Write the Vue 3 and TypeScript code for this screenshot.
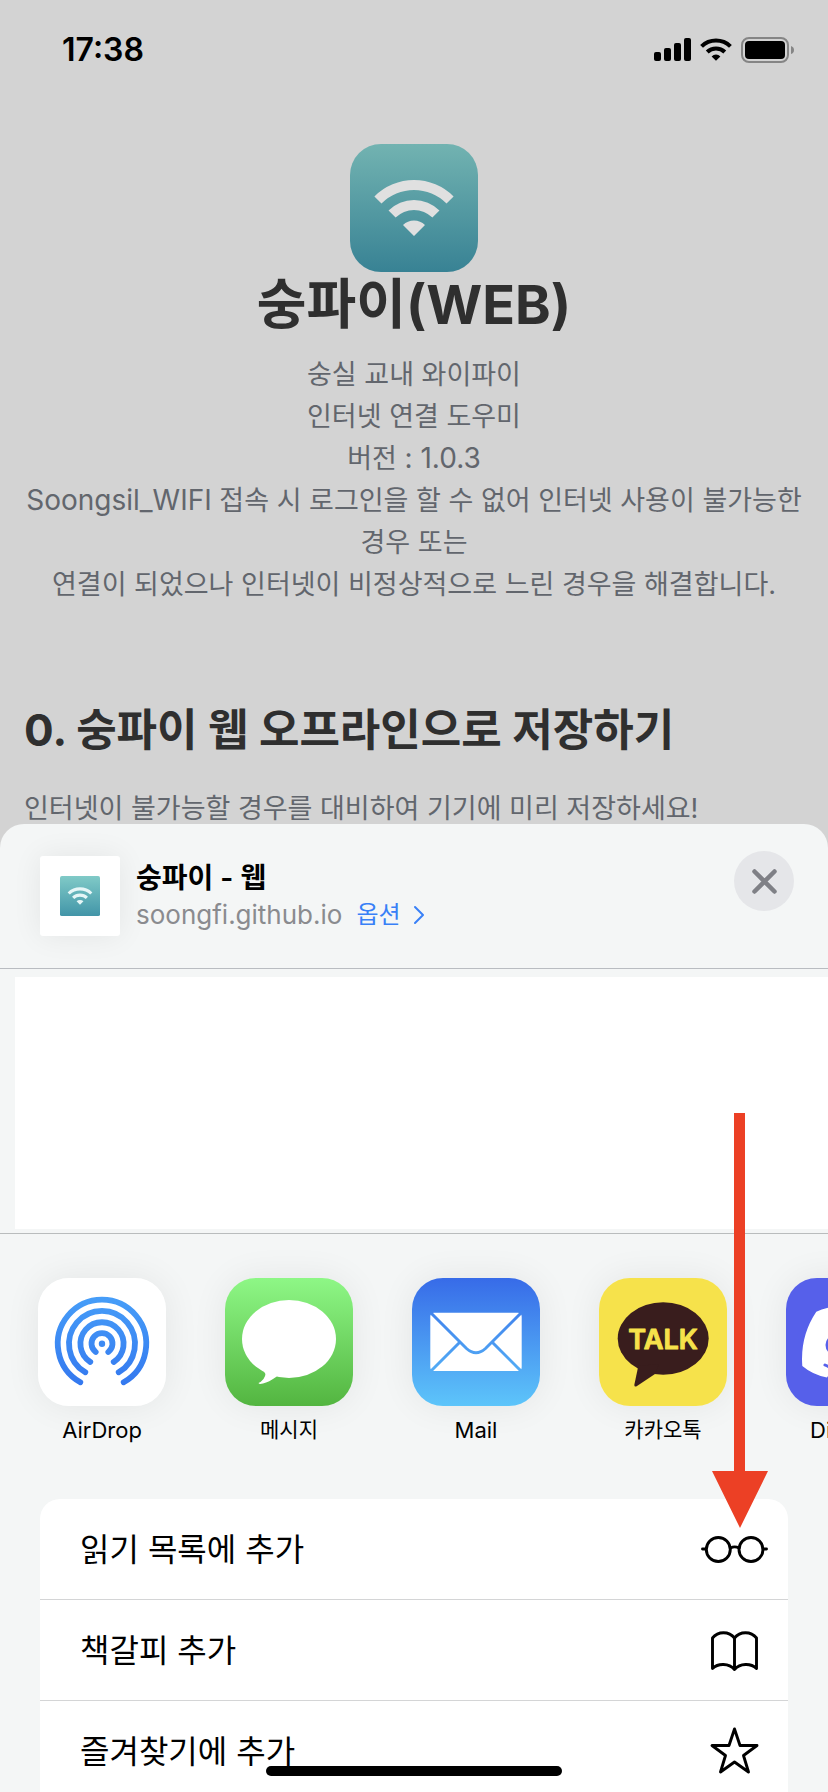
<script setup lang="ts">
interface ShareApp {
  id: string
  label: string
  latin: boolean
}

interface ShareAction {
  id: string
  label: string
}

const apps: ShareApp[] = [
  { id: 'airdrop', label: 'AirDrop', latin: true },
  { id: 'messages', label: '메시지', latin: false },
  { id: 'mail', label: 'Mail', latin: true },
  { id: 'kakaotalk', label: '카카오톡', latin: false },
  { id: 'discord', label: 'Discord', latin: true },
]

const actions: ShareAction[] = [
  { id: 'reading', label: '읽기 목록에 추가' },
  { id: 'bookmark', label: '책갈피 추가' },
  { id: 'favorite', label: '즐겨찾기에 추가' },
]

const sector = (outer: number, inner: number): string => {
  const o = outer * Math.SQRT1_2
  const i = inner * Math.SQRT1_2
  return `M${64 - o} ${92 - o}A${outer} ${outer} 0 0 1 ${64 + o} ${92 - o}L${64 + i} ${92 - i}A${inner} ${inner} 0 0 0 ${64 - i} ${92 - i}Z`
}

const wifiPath: string =
  sector(56, 46) + sector(36, 26) + 'M64 92L53 81A15.5 15.5 0 0 1 75 81Z'
</script>

<template>
  <div class="screen">
    <header class="status">
      <time class="clock">17:38</time>
      <div class="indicators">
        <svg class="signal" viewBox="0 0 37 24" aria-hidden="true">
          <rect x="0" y="14" width="7" height="9" rx="2" />
          <rect x="10" y="10" width="7" height="13" rx="2" />
          <rect x="20" y="5" width="7" height="18" rx="2" />
          <rect x="30" y="0" width="7" height="23" rx="2" />
        </svg>
        <svg class="wifi" viewBox="24 35 80 60" aria-hidden="true">
          <path :d="wifiPath" />
        </svg>
        <svg class="battery" viewBox="0 0 54 26" aria-hidden="true">
          <rect x="1" y="1" width="46" height="24" rx="7" fill="none" stroke="#858585" stroke-width="2" />
          <rect x="4" y="4" width="40" height="18" rx="4" />
          <path d="M50 9Q53 10 53 13T50 17Z" fill="#858585" />
        </svg>
      </div>
    </header>

    <main class="page">
      <svg class="logo" viewBox="0 0 128 128" role="img" aria-label="숭파이">
        <defs>
          <linearGradient id="logo-fill" x1="0" y1="0" x2="0" y2="1">
            <stop offset="0" stop-color="#72b3b1" />
            <stop offset="1" stop-color="#388294" />
          </linearGradient>
        </defs>
        <rect width="128" height="128" rx="31" fill="url(#logo-fill)" />
        <path :d="wifiPath" fill="#e0e0e0" />
      </svg>
      <h1 class="title">숭파이(WEB)</h1>
      <p class="intro">
        숭실 교내 와이파이<br />인터넷 연결 도우미<br />버전 <span class="latin">: 1.0.3</span><br /><span class="latin">Soongsil_WIFI</span> 접속 시 로그인을 할 수 없어 인터넷 사용이 불가능한
        경우 또는<br />연결이 되었으나 인터넷이 비정상적으로 느린 경우을 해결합니다.
      </p>
      <h2 class="section-title">0. 숭파이 웹 오프라인으로 저장하기</h2>
      <p class="section-text">인터넷이 불가능할 경우를 대비하여 기기에 미리 저장하세요!</p>
    </main>

    <section class="sheet" aria-label="공유">
      <header class="sheet-head">
        <div class="thumb">
          <svg viewBox="0 0 128 128" aria-hidden="true">
            <defs>
              <linearGradient id="thumb-fill" x1="0" y1="0" x2="0" y2="1">
                <stop offset="0" stop-color="#80cac7" />
                <stop offset="1" stop-color="#4295a8" />
              </linearGradient>
            </defs>
            <rect width="128" height="128" rx="6" fill="url(#thumb-fill)" />
            <path class="thumb-wifi" :d="wifiPath" fill="#e6f6f7" />
          </svg>
        </div>
        <div class="meta">
          <strong class="meta-title">숭파이 - 웹</strong>
          <div class="meta-line">
            <span class="domain">soongfi.github.io</span>
            <button class="options" type="button">
              옵션
              <svg viewBox="0 0 12 20" aria-hidden="true">
                <path d="M2 2L10 10L2 18" fill="none" stroke="currentColor" stroke-width="2" stroke-linecap="round" stroke-linejoin="round" />
              </svg>
            </button>
          </div>
        </div>
        <button class="close" type="button" aria-label="닫기">
          <svg viewBox="0 0 60 60" aria-hidden="true">
            <path d="M20.500 20.500L40.500 40.500M40.500 20.500L20.500 40.500" fill="none" stroke="#7f8086" stroke-width="4.500" stroke-linecap="round" />
          </svg>
        </button>
      </header>

      <div class="people"><div class="people-blank"></div></div>

      <ul class="apps">
        <li v-for="app in apps" :key="app.id">
          <button class="app" type="button">
            <svg v-if="app.id === 'airdrop'" class="app-icon" viewBox="0 0 128 128" aria-hidden="true">
              <defs>
                <linearGradient id="airdrop-fill" gradientUnits="userSpaceOnUse" x1="0" y1="20" x2="0" y2="108">
                  <stop offset="0" stop-color="#469df8" />
                  <stop offset="1" stop-color="#3478ef" />
                </linearGradient>
              </defs>
              <rect width="128" height="128" fill="#fff" />
              <g fill="none" stroke="url(#airdrop-fill)" stroke-width="5.8" stroke-linecap="round">
                <path d="M42.300 104.300A44.200 44.200 0 1 1 85.700 104.300" />
                <path d="M47.300 94.300A33 33 0 1 1 80.700 94.300" />
                <path d="M52.300 84A21.600 21.600 0 1 1 75.700 84" />
                <path d="M57.700 74A10.500 10.500 0 1 1 70.300 74" />
              </g>
              <circle cx="64" cy="65.700" r="3.200" fill="#3d8bf4" />
            </svg>
            <svg v-else-if="app.id === 'messages'" class="app-icon" viewBox="0 0 128 128" aria-hidden="true">
              <defs>
                <linearGradient id="messages-fill" x1="0" y1="0" x2="0" y2="1">
                  <stop offset="0" stop-color="#8ef786" />
                  <stop offset="1" stop-color="#53b540" />
                </linearGradient>
              </defs>
              <rect width="128" height="128" fill="url(#messages-fill)" />
              <ellipse cx="64" cy="61" rx="47" ry="39" fill="#fff" />
              <path d="M36 91Q43 95 38.500 101Q36 104 33.500 105Q34 106.500 38 105.500Q44 104 51 99L60 90Z" fill="#fff" />
            </svg>
            <svg v-else-if="app.id === 'mail'" class="app-icon" viewBox="0 0 128 128" aria-hidden="true">
              <defs>
                <linearGradient id="mail-fill" gradientUnits="userSpaceOnUse" x1="0" y1="0" x2="0" y2="128">
                  <stop offset="0" stop-color="#376be8" />
                  <stop offset="1" stop-color="#5dc5fa" />
                </linearGradient>
              </defs>
              <rect width="128" height="128" fill="url(#mail-fill)" />
              <rect x="18.300" y="34.700" width="91.400" height="58.300" rx="4" fill="#fff" />
              <g fill="none" stroke="url(#mail-fill)" stroke-width="3">
                <path d="M18.500 34.500L54.500 70.500Q64 79 73.500 70.500L109.500 34.500" />
                <path d="M48 64L18.500 93.500" />
                <path d="M80 64L109.500 93.500" />
              </g>
            </svg>
            <svg v-else-if="app.id === 'kakaotalk'" class="app-icon" viewBox="0 0 128 128" aria-hidden="true">
              <rect width="128" height="128" fill="#f6e24b" />
              <ellipse cx="64.200" cy="60.500" rx="45.500" ry="36.200" fill="#391d1d" />
              <path d="M39.300 88L35.300 107Q35.500 109.500 38 108L56 96L60 86Z" fill="#391d1d" />
              <text class="talk" x="64" y="71" text-anchor="middle">TALK</text>
            </svg>
            <svg v-else class="app-icon" viewBox="0 0 128 128" aria-hidden="true">
              <rect width="128" height="128" fill="#5660ea" />
              <path d="M30.300 33.700Q38 30 50 28L53 34Q64 32 75 34L78 28Q90 30 97.700 33.700Q114 58 111.700 88Q101 97 87 99.500L81 91Q64 96 47 91L41 99.500Q27 97 16.300 88Q14 58 30.300 33.700Z" fill="#fff" />
              <ellipse cx="48" cy="67" rx="8.500" ry="9.500" fill="#5660ea" />
              <ellipse cx="80" cy="67" rx="8.500" ry="9.500" fill="#5660ea" />
              <path d="M39 87Q64 99 89 87" fill="none" stroke="#5660ea" stroke-width="3" stroke-linecap="round" />
            </svg>
            <span class="app-label" :class="{ 'app-label-latin': app.latin }">{{ app.label }}</span>
          </button>
        </li>
      </ul>

      <ul class="actions">
        <li v-for="action in actions" :key="action.id" class="action-item">
          <button class="action" type="button">
            <span class="action-label">{{ action.label }}</span>
            <svg class="action-icon" viewBox="0 0 68 48" aria-hidden="true">
              <g fill="none" stroke="#000" stroke-width="2.900" stroke-linecap="round" stroke-linejoin="round">
                <template v-if="action.id === 'reading'">
                  <circle cx="18.300" cy="24.500" r="12" />
                  <circle cx="51" cy="24.500" r="12" />
                  <path d="M30.500 23Q34.600 20.800 39 23M2.500 24H6M63 24H66.500" />
                </template>
                <template v-else-if="action.id === 'bookmark'">
                  <path d="M34.500 12C29 5 18 5 12.500 12V42.500C18 37 29 37 34.500 43.500C40 37 51 37 56.500 42.500V12C51 5 40 5 34.500 12ZM34.500 12V43.500" />
                </template>
                <template v-else>
                  <path d="M34.500 2L40 18.500H57L43.500 28.500L48.500 45L34.500 35L20.500 45L25.500 28.500L12 18.500H29Z" />
                </template>
              </g>
            </svg>
          </button>
        </li>
      </ul>
    </section>

    <svg class="pointer" viewBox="0 0 56 415" aria-hidden="true">
      <path d="M22 0H33V358H56L28 415L0 358H22Z" fill="#ec4025" />
    </svg>
    <div class="home-bar"></div>
  </div>
</template>

<style>
body {
  margin: 0;
  background: #d3d3d3;
}
</style>

<style scoped>
.screen {
  position: relative;
  display: flex;
  flex-direction: column;
  height: 100vh;
  overflow: hidden;
  background: #d3d3d3;
  font-family: Inter, "Noto Sans CJK KR", sans-serif;
  color: #000;
}

h1, h2, p, ul {
  margin: 0;
  padding: 0;
}

ul {
  list-style: none;
}

button {
  padding: 0;
  border: 0;
  background: none;
  color: inherit;
  font: inherit;
}

svg {
  display: block;
  flex: none;
}

.status {
  display: flex;
  flex: none;
  justify-content: space-between;
  align-items: center;
  box-sizing: border-box;
  height: 100px;
  padding: 0 33px 0 62px;
}

.clock {
  font-size: 32px;
  font-weight: 600;
  line-height: 40px;
}

.indicators {
  display: flex;
  align-items: center;
  gap: 9px;
}

.signal {
  width: 37px;
  height: 24px;
}

.wifi {
  width: 32px;
  height: 24px;
}

.battery {
  width: 54px;
  height: 26px;
}

.page {
  display: flex;
  flex: none;
  flex-direction: column;
  padding: 44px 24px 0;
  word-break: keep-all;
}

.logo {
  align-self: center;
  width: 128px;
  height: 128px;
}

.title {
  margin-bottom: 16px;
  color: #2f2f2f;
  font-size: 54px;
  font-weight: 700;
  line-height: 66px;
  text-align: center;
}

.intro,
.section-text {
  color: #62666d;
  font-size: 27px;
  line-height: 42px;
}

.latin {
  font-size: 28px;
  line-height: 1;
}

.intro {
  margin-bottom: 94px;
  text-align: center;
}

.section-title {
  margin-bottom: 28px;
  color: #2f2f2f;
  font-size: 44px;
  font-weight: 700;
  line-height: 60px;
}

.sheet {
  position: relative;
  flex: 1;
  min-height: 0;
  margin-top: -6px;
  overflow: hidden;
  border-radius: 24px 24px 0 0;
  background: #f4f6f6;
}

.sheet-head {
  display: flex;
  align-items: flex-start;
  box-sizing: border-box;
  height: 145px;
  padding: 27px 34px 0 40px;
  border-bottom: 1px solid #b9bcc1;
}

.thumb {
  display: grid;
  place-items: center;
  width: 80px;
  height: 80px;
  margin: 5px 16px 0 0;
  border-radius: 3px;
  background: #fff;
  box-shadow: 0 0 30px rgba(0, 0, 0, 0.07);
}

.thumb svg {
  width: 40px;
  height: 40px;
}

.thumb-wifi {
  filter: blur(2px);
}

.meta {
  flex: 1;
  padding-top: 8px;
}

.meta-title {
  display: block;
  font-size: 28px;
  font-weight: 600;
  line-height: 38px;
}

.meta-line {
  display: flex;
  align-items: center;
  gap: 14px;
  line-height: 36px;
}

.domain {
  color: #8a8b8f;
  font-size: 26px;
}

.options {
  display: flex;
  align-items: center;
  gap: 12px;
  color: #3880f7;
  font-size: 24px;
}

.options svg {
  width: 12px;
  height: 20px;
}

.close {
  width: 60px;
  height: 60px;
  border-radius: 50%;
  background: #e5e6e9;
}

.people {
  padding: 8px 0 4px 15px;
  border-bottom: 1px solid #b9bcbd;
}

.people-blank {
  height: 252px;
  background: #fff;
}

.apps {
  display: flex;
  gap: 59px;
  padding: 44px 0 0 38px;
}

.app {
  display: flex;
  flex-direction: column;
  align-items: center;
  gap: 9px;
  width: 128px;
}

.app-icon {
  width: 128px;
  height: 128px;
  border-radius: 31px;
  box-shadow: 0 0 36px rgba(0, 0, 0, 0.07);
}

.app-label {
  font-size: 21px;
  line-height: 30px;
}

.app-label-latin {
  font-size: 22px;
}

.talk {
  fill: #f6e24b;
  stroke: #f6e24b;
  stroke-width: 1;
  stroke-linejoin: round;
  font-size: 27px;
  font-weight: 600;
}

.actions {
  margin: 54px 40px 0;
  overflow: hidden;
  border-radius: 20px 20px 0 0;
  background: #fff;
}

.action-item {
  border-bottom: 1px solid #d4d5d6;
}

.action {
  display: flex;
  align-items: center;
  justify-content: space-between;
  width: 100%;
  height: 100px;
  padding: 0 20px 0 40px;
  font-size: 32px;
}

.action-label {
  padding-bottom: 5px;
}

.action-icon {
  width: 68px;
  height: 48px;
}

.pointer {
  position: absolute;
  right: 60px;
  bottom: 264px;
  width: 56px;
  height: 415px;
}

.home-bar {
  position: absolute;
  bottom: 16px;
  left: 50%;
  width: 296px;
  height: 10px;
  margin-left: -148px;
  border-radius: 5px;
  background: #000;
}
</style>
